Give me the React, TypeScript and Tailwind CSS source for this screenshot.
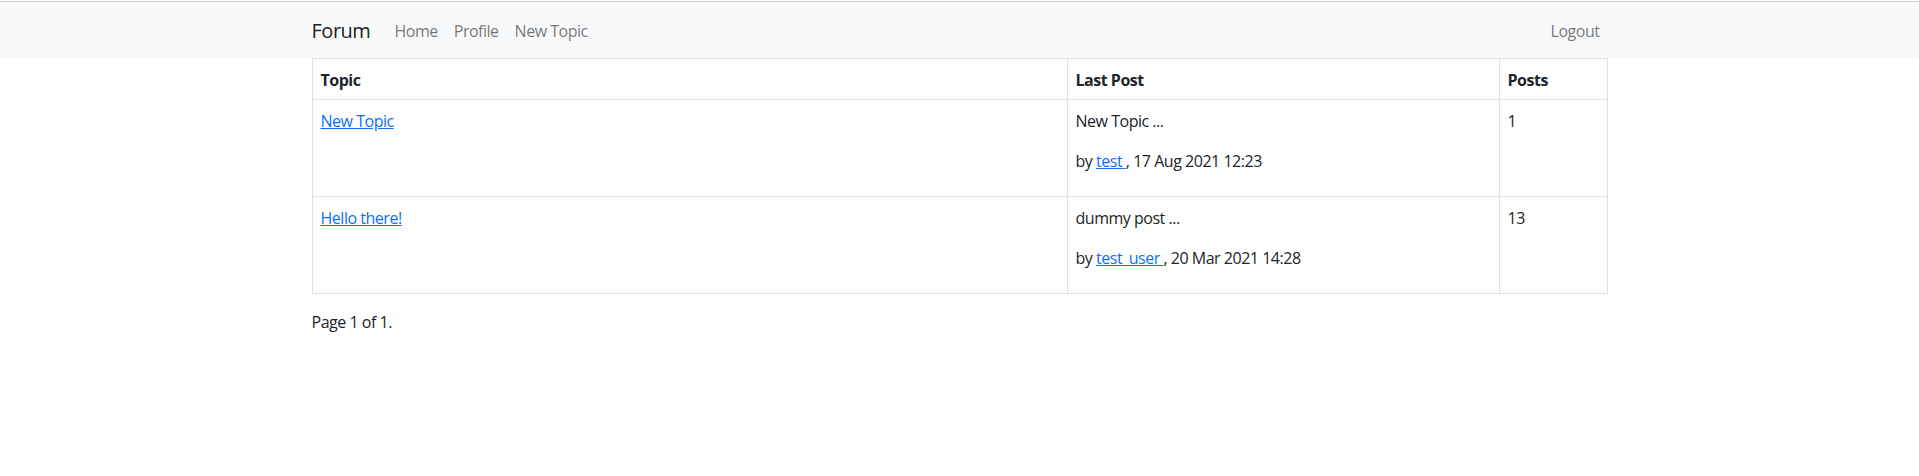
const topics = [
  {
    title: 'New Topic',
    excerpt: 'New Topic ...',
    author: 'test',
    date: '17 Aug 2021 12:23',
    posts: 1,
  },
  {
    title: 'Hello there!',
    excerpt: 'dummy post ...',
    author: 'test_user',
    date: '20 Mar 2021 14:28',
    posts: 13,
  },
];

const cell = 'border border-[#dee2e6] px-2 pt-[9px] pb-[7px] text-left align-top';

const Navbar = () => (
  <nav className="bg-[#f8f9fa] pt-[9px] pb-[7px]">
    <div className="mx-auto flex w-[1296px] items-center justify-between">
      <div className="flex items-center">
        <a href="#" className="mr-4 py-[5px] text-[20px] leading-[30px] text-black/90">
          Forum
        </a>
        <div className="flex">
          {['Home', 'Profile', 'New Topic'].map((label) => (
            <a key={label} href="#" className="px-2 py-2 leading-6 text-black/55">
              {label}
            </a>
          ))}
        </div>
      </div>
      <a href="#" className="px-2 py-2 leading-6 text-black/55">
        Logout
      </a>
    </div>
  </nav>
);

const App = () => {
  return (
    <div className="min-h-[476px] bg-white pt-px font-['Open_Sans',sans-serif] text-base leading-6 tracking-[-0.03em] text-[#212529]">
      <div className="h-px bg-[#d0d0d0]" />
      <Navbar />
      <div className="mx-auto w-[1296px]">
        <table className="mb-4 w-full table-fixed border-collapse border border-[#dee2e6]">
          <thead>
            <tr>
              <th className={`w-[755px] font-bold ${cell}`}>Topic</th>
              <th className={`w-[432px] font-bold ${cell}`}>Last Post</th>
              <th className={`font-bold ${cell}`}>Posts</th>
            </tr>
          </thead>
          <tbody>
            {topics.map((t) => (
              <tr key={t.title}>
                <td className={cell}>
                  <a href="#" className="text-[#0d6efd] underline">
                    {t.title}
                  </a>
                </td>
                <td className={cell}>
                  <p className="mb-4">{t.excerpt}</p>
                  <p className="mb-4">
                    by{' '}
                    <a href="#" className="text-[#0d6efd] underline">
                      {t.author}{' '}
                    </a>
                    , {t.date}
                  </p>
                </td>
                <td className={cell}>{t.posts}</td>
              </tr>
            ))}
          </tbody>
        </table>
        <p>Page 1 of 1.</p>
      </div>
    </div>
  );
};

export default App;
